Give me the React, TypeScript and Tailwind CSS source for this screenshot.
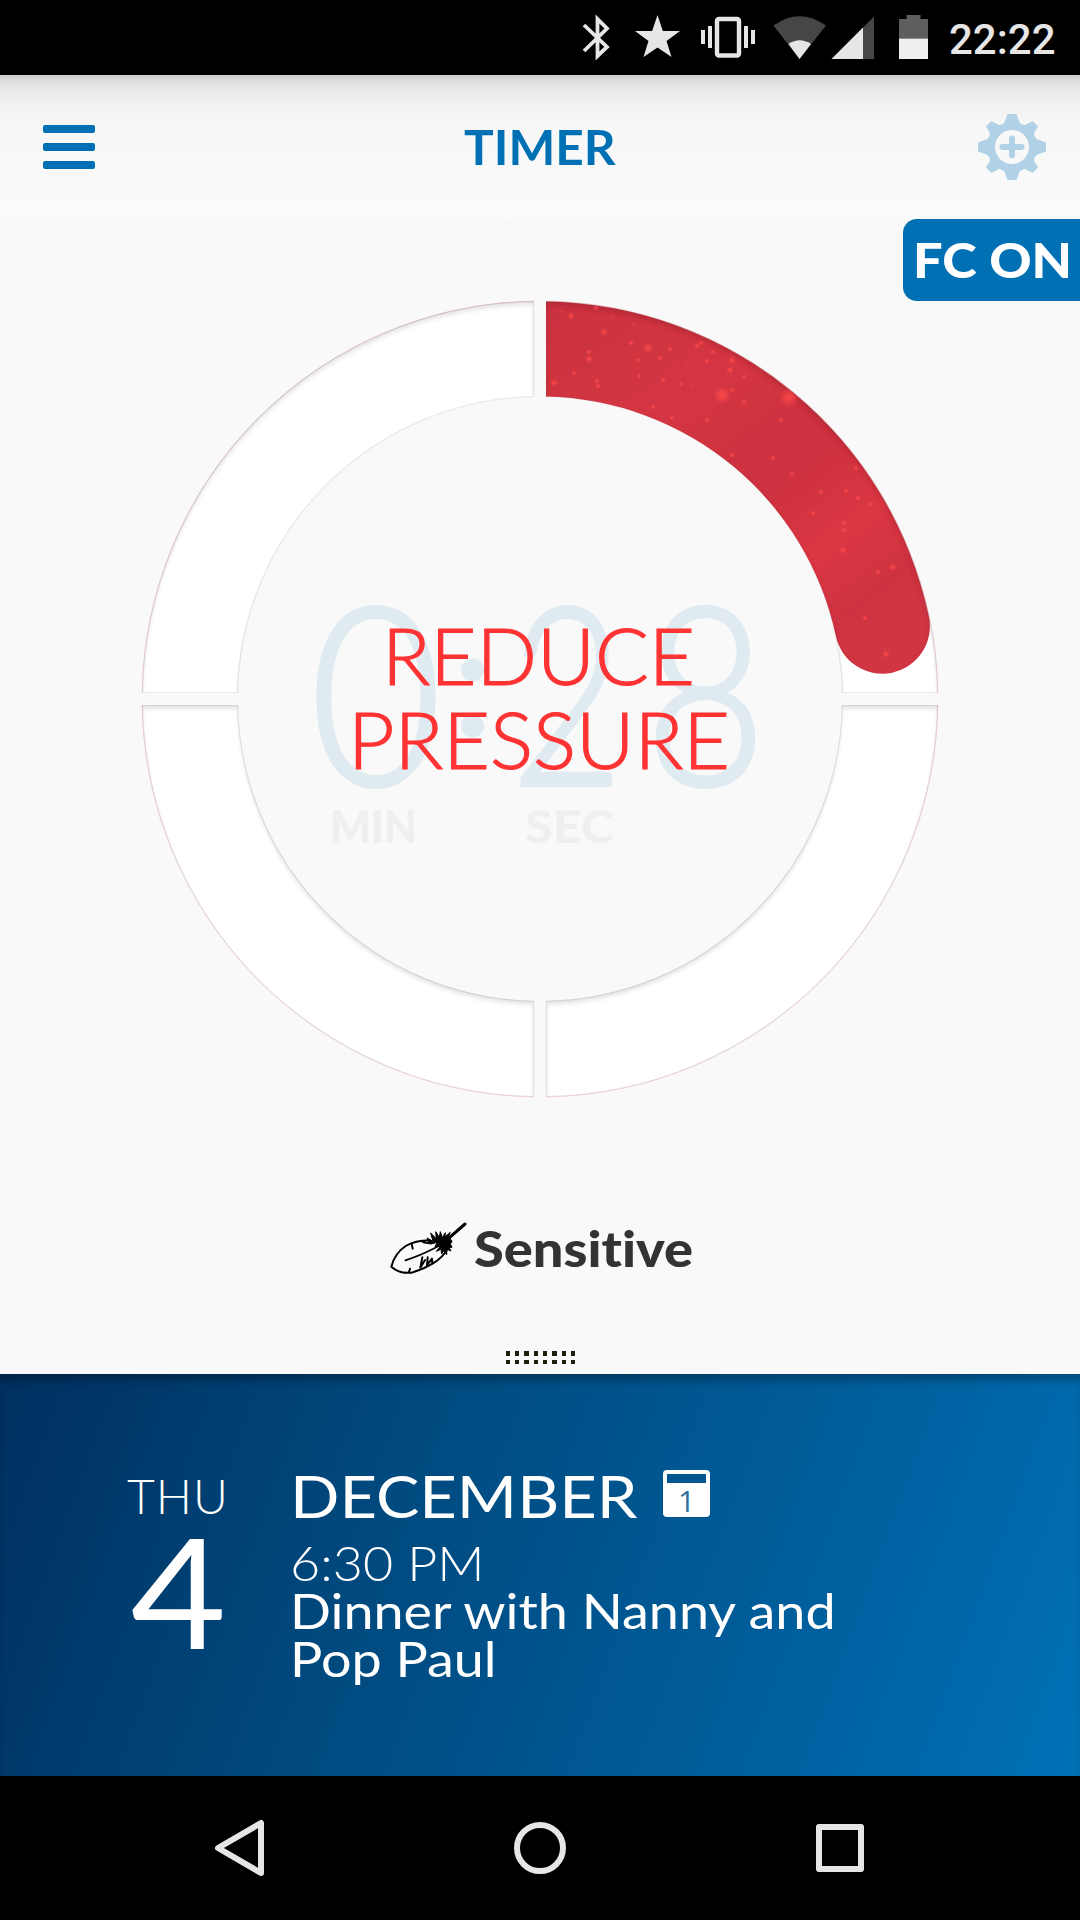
import React from 'react';

const CENTER = 400;
const OUTER = 397.5;
const INNER = 302.5;
const GAP = 6.5;

// [x, y, radius] of the glowing specks on the progress arc
const SPARKS: [number, number, number][] = [
  [431, 17, 4], [456, 9, 3], [464, 33, 4], [449, 53, 3], [449, 60, 4], [434, 74, 3], [414, 84, 4],
  [457, 82, 3], [458, 87, 3], [491, 44, 3], [508, 49, 5], [498, 61, 3], [520, 59, 3], [499, 77, 3],
  [523, 81, 3], [541, 85, 3], [530, 50, 3], [557, 47, 3], [561, 44, 3], [573, 53, 3], [567, 62, 3],
  [592, 61, 4], [590, 71, 4], [604, 78, 3], [582, 96, 9], [649, 98, 10], [592, 91, 3], [604, 103, 3],
  [513, 108, 3], [532, 119, 3], [567, 121, 3], [641, 121, 3], [592, 156, 3], [633, 159, 3], [652, 175, 3],
  [716, 169, 3], [681, 193, 3], [706, 192, 3], [718, 199, 3], [730, 205, 3], [673, 214, 3], [704, 224, 3],
  [704, 231, 3], [703, 251, 4], [738, 273, 3], [753, 268, 4], [725, 319, 3], [746, 355, 4], [546, 64, 2],
  [422, 12, 2], [472, 18, 2], [493, 25, 2], [553, 87, 2], [482, 103, 2],
];

const polar = (r: number, deg: number) => {
  const a = (deg * Math.PI) / 180;
  return `${CENTER + r * Math.sin(a)} ${CENTER - r * Math.cos(a)}`;
};

const quadrantPath = (sx: number, sy: number) => {
  const o = Math.sqrt(OUTER * OUTER - GAP * GAP);
  const i = Math.sqrt(INNER * INNER - GAP * GAP);
  const p = (x: number, y: number) => `${CENTER + sx * x} ${CENTER + sy * y}`;
  const sweep = sx * sy > 0 ? 0 : 1;
  return `M${p(GAP, o)} A${OUTER} ${OUTER} 0 0 ${sweep} ${p(o, GAP)} L${p(i, GAP)} A${INNER} ${INNER} 0 0 ${1 - sweep} ${p(GAP, i)} Z`;
};

const progressPath = (deg: number) =>
  `M406 2.500 A${OUTER} ${OUTER} 0 0 1 ${polar(OUTER, deg)} A47.500 47.500 0 0 1 ${polar(INNER, deg)} A${INNER} ${INNER} 0 0 0 406 97.600 Z`;

const StatusBar: React.FC = () => (
  <div className="flex h-[75px] shrink-0 bg-black">
    <svg className="ml-[560px] h-[75px] w-[380px]" viewBox="0 0 380 75" fill="#e6e6e6">
      <path d="M24 25 L47 47 L37.500 56 V19 L47 28.500 L24 51" fill="none" stroke="#e6e6e6" strokeWidth="3.800" />
      <path d="M97.500 15 L102.800 31 H120 L106.500 41 L111.500 57 L97.500 47.500 L83.500 57 L88.500 41 L75 31 H92.200Z" />
      <rect x="157" y="19" width="22" height="36.500" rx="2" fill="none" stroke="#e6e6e6" strokeWidth="4.400" />
      <path d="M141 30h4v14h-4zM148 26h4v22h-4zM184 26h4v22h-4zM191 30h4v14h-4z" />
      <path d="M213.500 25.500 Q239.500 7 266 25.500 L239.500 59Z" fill="#464646" />
      <path d="M228.500 44 Q239.500 36.500 251 44 L239.500 59Z" />
      <path d="M314 16.500 V59 H271.500Z" fill="#464646" />
      <path d="M303 27.500 V59 H271.500Z" />
      <path d="M339 19h7.500v-4h14v4h7.500v19.500h-29z" fill="#5e5e5e" />
      <path d="M339 38.500h29v20.500h-29z" fill="#efefef" />
    </svg>
    <span className="ml-[9px] mt-[19px] font-['Roboto',sans-serif] text-[42px] leading-[42px] font-medium text-[#e6e6e6]">22:22</span>
  </div>
);

const Header: React.FC = () => (
  <header className="grid h-36 shrink-0 grid-cols-[1fr_auto_1fr] items-center bg-[linear-gradient(180deg,#cfcfcf_0,#d3d3d3_3px,#dcdcdc_5px,#e8e8e8_14px,#f2f2f2_30px,#f7f7f7_50px,#fafbfa_144px)]">
    <button className="ml-[43px] flex w-[52px] flex-col gap-[10px]">
      <span className="h-2 rounded-[2px] bg-[#0070b5]" />
      <span className="h-2 rounded-[2px] bg-[#0070b5]" />
      <span className="h-2 rounded-[2px] bg-[#0070b5]" />
    </button>
    <h1 className="scale-x-[1.055] text-[47px] leading-[48px] font-bold text-[#0070b5]">TIMER</h1>
    <svg className="mr-[33px] size-[70px] justify-self-end" viewBox="-35 -35 70 70">
      <path
        fill="#b0d1e6"
        fillRule="evenodd"
        d="M-4.500 -33 H4.500 L7.500 -24.500 Q9 -22.500 13 -22 L20.500 -26 L26 -20.500 L22 -14 Q22.500 -10 24.500 -8 L34 -4.500 V4.500 L24.500 8 Q22.500 10 22 14 L26 20.500 L20.500 26 L13 22 Q9 22.500 7.500 24.500 L4.500 33 H-4.500 L-7.500 24.500 Q-9 22.500 -13 22 L-20.500 26 L-26 20.500 L-22 14 Q-22.500 10 -24.500 8 L-34 4.500 V-4.500 L-24.500 -8 Q-22.500 -10 -22 -14 L-26 -20.500 L-20.500 -26 L-13 -22 Q-9 -22.500 -7.500 -24.500Z M0 -17 A17 17 0 1 0 0 17 A17 17 0 1 0 0 -17Z"
      />
      <path d="M-9.500 0 H9.500 M0 -8.500 V8.500" stroke="#b0d1e6" strokeWidth="6" strokeLinecap="round" />
    </svg>
  </header>
);

const Dial: React.FC = () => (
  <svg className="size-[796px] self-center overflow-visible font-['Lato',sans-serif]" viewBox="2 2 796 796">
    <defs>
      <filter id="inset" x="-5%" y="-5%" width="110%" height="110%">
        <feComponentTransfer in="SourceAlpha" result="inverse">
          <feFuncA type="linear" slope="-1" intercept="1" />
        </feComponentTransfer>
        <feGaussianBlur in="inverse" stdDeviation="2" />
        <feOffset dy="3.500" result="shadow" />
        <feFlood floodColor="#000" floodOpacity="0.22" />
        <feComposite in2="shadow" operator="in" />
        <feComposite in2="SourceAlpha" operator="in" result="inner" />
        <feMerge>
          <feMergeNode in="SourceGraphic" />
          <feMergeNode in="inner" />
        </feMerge>
      </filter>
      <linearGradient id="progress" gradientUnits="userSpaceOnUse" x1="410" y1="20" x2="700" y2="390">
        <stop offset="0" stopColor="#cb3340" />
        <stop offset="0.18" stopColor="#d03441" />
        <stop offset="0.3" stopColor="#d53643" />
        <stop offset="0.5" stopColor="#cd323f" />
        <stop offset="0.62" stopColor="#d03340" />
        <stop offset="0.74" stopColor="#da3743" />
        <stop offset="0.88" stopColor="#cf3341" />
        <stop offset="1" stopColor="#d03543" />
      </linearGradient>
      <radialGradient id="spark">
        <stop offset="0" stopColor="#ff4a4a" />
        <stop offset="0.4" stopColor="#ff4a4a" stopOpacity="0.6" />
        <stop offset="1" stopColor="#ff4a4a" stopOpacity="0" />
      </radialGradient>
      <clipPath id="progressClip">
        <path d={progressPath(78)} />
      </clipPath>
    </defs>

    {[[-1, -1], [1, -1], [-1, 1], [1, 1]].map(([sx, sy]) => (
      <path key={`${sx}${sy}`} d={quadrantPath(sx, sy)} fill="#fff" stroke="#ebebeb" strokeWidth="1.200" filter="url(#inset)" />
    ))}
    <circle cx={CENTER} cy={CENTER} r={OUTER + 0.5} fill="none" stroke="#d9374a" strokeWidth="0.600" opacity="0.28" strokeDasharray="612.200 13" strokeDashoffset="-6.500" />

    <path d={progressPath(78)} fill="url(#progress)" filter="url(#inset)" />
    <g clipPath="url(#progressClip)">
      {SPARKS.map(([x, y, r]) => (
        <circle key={`${x}-${y}`} cx={x} cy={y} r={r} fill="url(#spark)" opacity={r > 2 ? 0.95 : 0.5} />
      ))}
    </g>

    <g fill="#e0ebf1" stroke="#e0ebf1" strokeWidth="4" fontSize="249" fontWeight="300">
      <text x="170" y="486" textLength="132" lengthAdjust="spacingAndGlyphs">0</text>
      <circle cx="332.500" cy="371" r="9.500" />
      <circle cx="332.500" cy="427" r="9.500" />
      <text x="371" y="486" textLength="112" lengthAdjust="spacingAndGlyphs">2</text>
      <text x="505" y="486" textLength="121" lengthAdjust="spacingAndGlyphs">8</text>
    </g>
    <g fill="#efefef" fontSize="46" fontWeight="900">
      <text x="190" y="544" textLength="87" lengthAdjust="spacingAndGlyphs">MIN</text>
      <text x="385" y="544" textLength="89" lengthAdjust="spacingAndGlyphs">SEC</text>
    </g>
    <g fill="#ff3333" stroke="#ff3333" strokeWidth="1.200" fontSize="79" fontWeight="300">
      <text x="242" y="386" textLength="313" lengthAdjust="spacingAndGlyphs">REDUCE</text>
      <text x="208" y="470" textLength="382" lengthAdjust="spacingAndGlyphs">PRESSURE</text>
    </g>
  </svg>
);

const Feather: React.FC = () => (
  <svg className="h-14 w-20" viewBox="55 60 240 168" fill="none" stroke="#000" strokeLinecap="round" strokeLinejoin="round">
    <path d="M180 121 Q135 122 108 138 Q75 160 65 200 Q90 222 125 218 Q160 208 190 190 Q220 172 232 148" strokeWidth="6" />
    <path d="M107 181 Q150 168 200 142 Q240 116 256 97" strokeWidth="5" />
    <path d="M240 112 L286 72" strokeWidth="9" />
    <path d="M126 131 L129 146 M118 216 L121 206 M152 203 L158 172 M153 202 L166 180 M172 196 L174 172 M173 194 L187 176 L188 188" strokeWidth="6" />
    <path d="M158 122 L178 130 L172 114 L190 124 L183 99 L200 116 L198 95 L209 112 L212 95 L218 113 L227 98 L226 110 L242 97 L236 110 L247 106 L241 116 L247 124 L242 132 L247 142 L238 142 L244 153 L232 148 L231 164 L222 152 L216 162 L214 148 L200 154 L211 140 L196 140 L203 127 L184 132 L160 128Z" fill="#000" strokeWidth="3" />
  </svg>
);

const DragHandle: React.FC = () => (
  <div className="ml-px grid grid-cols-8 gap-x-[5px] gap-y-[4px]">
    {Array.from({ length: 16 }).map((_, i) => (
      <span key={i} className="size-[4.300px] bg-[#1c200c]" />
    ))}
  </div>
);

const CalendarIcon: React.FC = () => (
  <span className="mb-[5px] flex size-[47px] flex-col items-center rounded-[4px] bg-white px-[4px] pt-[4px]">
    <span className="h-[9px] w-full bg-[#00568f]" />
    <span className="mt-[2px] font-['Open_Sans',sans-serif] text-[30px] leading-[31px] text-[#2a6f9f]">1</span>
  </span>
);

const EventPanel: React.FC = () => (
  <section className="flex h-[402px] shrink-0 bg-[linear-gradient(110deg,#003060_0%,#004a7f_36%,#005c99_68%,#0071b6_100%)] text-white shadow-[inset_0_10px_10px_-4px_rgba(0,0,0,0.3)]">
    <div className="ml-[120px] flex w-[116px] flex-col items-center pt-[98px]">
      <span className="text-[48px] leading-[48px] font-light tracking-[1px]">THU</span>
      <span className="mt-[-6px] scale-x-[1.08] text-[153px] leading-[153px]">4</span>
    </div>
    <div className="ml-[54px] pt-[92px]">
      <div className="flex items-center gap-[63px]">
        <h2 className="origin-left scale-x-[1.12] text-[58px] leading-[60px]">DECEMBER</h2>
        <CalendarIcon />
      </div>
      <p className="mt-[13px] origin-left scale-x-[1.085] text-[48px] leading-[48px] font-light">6:30 PM</p>
      <p className="origin-left scale-x-[1.123] text-[48px] leading-[48px]">
        Dinner with Nanny and
        <br />
        Pop Paul
      </p>
    </div>
  </section>
);

const NavBar: React.FC = () => (
  <nav className="flex h-36 shrink-0 items-center justify-center gap-[240px] bg-black">
    <svg className="size-[60px]" viewBox="0 0 60 60" fill="none" stroke="#e6e6e6" strokeWidth="6" strokeLinejoin="round">
      <path d="M51 5 V55 L8 30Z" />
    </svg>
    <svg className="size-[60px]" viewBox="0 0 60 60" fill="none" stroke="#e6e6e6" strokeWidth="6">
      <circle cx="30" cy="30" r="23" />
    </svg>
    <svg className="size-[60px]" viewBox="0 0 60 60" fill="none" stroke="#e6e6e6" strokeWidth="6" strokeLinejoin="round">
      <rect x="9" y="9" width="42" height="42" />
    </svg>
  </nav>
);

const App: React.FC = () => {
  return (
    <div className="flex h-[1920px] w-[1080px] flex-col overflow-hidden bg-[#f9f9f9] font-['Lato',sans-serif]">
      <StatusBar />
      <Header />
      <main className="flex flex-1 flex-col">
        <div className="flex h-[82px] w-[177px] items-center self-end rounded-l-[14px] bg-[#0070b5] pl-[10px] text-white">
          <span className="origin-left scale-x-[1.09] text-[48px] leading-[48px] font-black whitespace-nowrap">FC ON</span>
        </div>
        <Dial />
        <div className="mt-[123px] flex h-14 items-center pl-[388px]">
          <Feather />
          <span className="ml-[6px] origin-left scale-x-[1.105] text-[49px] leading-[56px] font-black text-[#333] [font-variant-ligatures:none]">
            Sensitive
          </span>
        </div>
        <div className="mt-auto mb-[10px] self-center">
          <DragHandle />
        </div>
      </main>
      <EventPanel />
      <NavBar />
    </div>
  );
};

export default App;
